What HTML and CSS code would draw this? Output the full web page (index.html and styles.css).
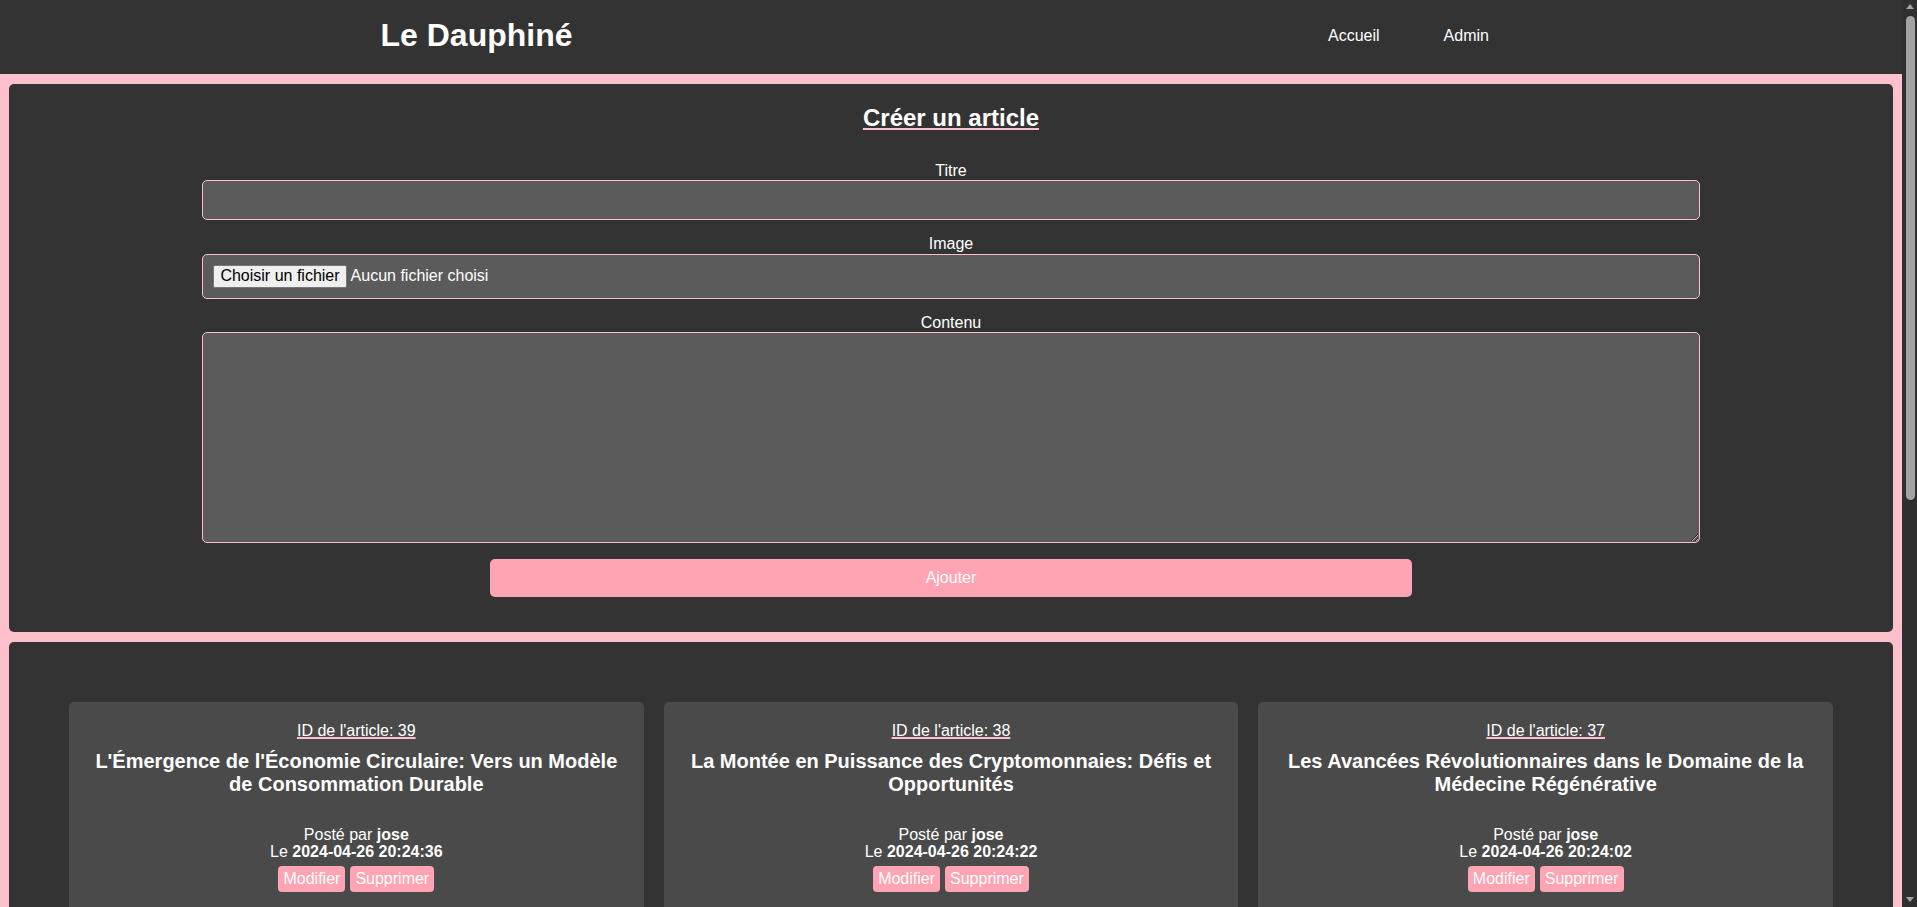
FILE: index.html
```html
<!DOCTYPE html>
<html lang="fr">
<head>
<meta charset="utf-8">
<title>Le Dauphiné</title>
<link rel="stylesheet" href="styles.css">
</head>
<body>
<header class="site-header">
  <div class="brand-col"><h1 class="brand">Le Dauphiné</h1></div>
  <nav class="nav-col">
    <a class="nav-link" href="#">Accueil</a>
    <a class="nav-link" href="#">Admin</a>
  </nav>
</header>
<main class="page">
  <section class="panel create-panel">
    <h2 class="panel-title">Créer un article</h2>
    <form class="create-form">
      <label class="field-label" for="titre">Titre</label>
      <input class="field" id="titre" type="text">
      <label class="field-label" for="image">Image</label>
      <div class="field file-field">
        <label class="file-btn" for="image">Choisir un fichier</label>
        <span class="file-name">Aucun fichier choisi</span>
        <input class="file-hidden" id="image" type="file">
      </div>
      <label class="field-label" for="contenu">Contenu</label>
      <textarea class="field area" id="contenu"></textarea>
      <button class="submit-btn" type="button">Ajouter</button>
    </form>
  </section>
  <section class="panel list-panel">
    <div class="article-grid">
      <article class="article-card">
        <p class="article-id"><a href="#">ID de l'article: 39</a></p>
        <h3 class="article-title">L'Émergence de l'Économie Circulaire: Vers un Modèle de Consommation Durable</h3>
        <p class="article-meta">Posté par <b>jose</b><br>Le <b>2024-04-26 20:24:36</b></p>
        <div class="article-actions"><button class="small-btn" type="button">Modifier</button><button class="small-btn" type="button">Supprimer</button></div>
      </article>
      <article class="article-card">
        <p class="article-id"><a href="#">ID de l'article: 38</a></p>
        <h3 class="article-title">La Montée en Puissance des Cryptomonnaies: Défis et Opportunités</h3>
        <p class="article-meta">Posté par <b>jose</b><br>Le <b>2024-04-26 20:24:22</b></p>
        <div class="article-actions"><button class="small-btn" type="button">Modifier</button><button class="small-btn" type="button">Supprimer</button></div>
      </article>
      <article class="article-card">
        <p class="article-id"><a href="#">ID de l'article: 37</a></p>
        <h3 class="article-title">Les Avancées Révolutionnaires dans le Domaine de la Médecine Régénérative</h3>
        <p class="article-meta">Posté par <b>jose</b><br>Le <b>2024-04-26 20:24:02</b></p>
        <div class="article-actions"><button class="small-btn" type="button">Modifier</button><button class="small-btn" type="button">Supprimer</button></div>
      </article>
    </div>
  </section>
</main>
<div class="fake-scrollbar" aria-hidden="true">
  <span class="sb-arrow sb-up"></span>
  <span class="sb-thumb"></span>
  <span class="sb-fill"></span>
  <span class="sb-arrow sb-down"></span>
</div>
</body>
</html>
```

FILE: styles.css
```css
* { font-family: "Liberation Sans", Arial, sans-serif; }

body {
  margin: 0;
  padding-right: 15px;
  background: #ffc0cb;
  color: #ffffff;
  font-size: 16px;
}

.site-header {
  display: grid;
  grid-template-columns: 1fr 1fr;
  align-items: center;
  background: #333333;
  padding: 17px 0 20px;
}

.brand-col {
  display: flex;
  justify-content: center;
  padding-left: 2px;
}

.brand {
  margin: 0;
  font-size: 32px;
  font-weight: bold;
  line-height: 37px;
}

.nav-col {
  display: flex;
  justify-content: center;
  gap: 64px;
  padding-right: 36px;
}

.nav-link {
  color: #ffffff;
  text-decoration: none;
  font-size: 16px;
}

.page {
  display: flex;
  flex-direction: column;
  gap: 10px;
  padding: 10px 9px;
}

.panel {
  background: #333333;
  border-radius: 5px;
}

.create-panel {
  padding: 20px;
}

.panel-title {
  margin: 0 0 20px;
  text-align: center;
  font-size: 24px;
  line-height: 27.6px;
  text-decoration: underline;
  text-decoration-color: #ffc0cb;
}

.create-form {
  display: flex;
  flex-direction: column;
  align-items: center;
}

.field-label {
  margin-top: 10px;
  line-height: 18.4px;
}

.field {
  box-sizing: content-box;
  width: 80%;
  padding: 10px;
  margin: 0 0 5px;
  border: 1px solid #ffc0cb;
  border-radius: 5px;
  background: #5b5b5b;
  color: #ffffff;
  font-size: 16px;
  line-height: 18.4px;
  height: 18.4px;
  outline: none;
}

.file-field {
  display: flex;
  align-items: center;
  height: 23px;
}

.file-btn {
  background: #efefef;
  color: #000000;
  border: 1px solid #767676;
  border-radius: 2px;
  padding: 1px 6px;
  line-height: 18.6px;
  margin-right: 4px;
}

.file-name {
  color: #ffffff;
}

.file-hidden {
  display: none;
}

.area {
  height: 189px;
  resize: vertical;
}

.submit-btn {
  width: 50%;
  margin: 11px 0 15px;
  padding: 10px;
  border: none;
  border-radius: 5px;
  background: #ffa4b2;
  color: #ffffff;
  font-size: 16px;
  line-height: 18px;
}

.list-panel {
  padding: 60px;
  min-height: 868px;
}

.article-grid {
  display: grid;
  grid-template-columns: repeat(3, 1fr);
  gap: 20px;
}

.article-card {
  background: #4a4a4a;
  border-radius: 5px;
  padding: 20px;
  text-align: center;
}

.article-id {
  margin: 0;
  line-height: 18.4px;
}

.article-id a {
  color: #ffffff;
  text-decoration: underline;
  text-decoration-color: #ffc0cb;
  text-decoration-thickness: 2px;
}

.article-title {
  margin: 9px 0 30px;
  font-size: 20px;
  line-height: 23px;
}

.article-meta {
  margin: 0;
  line-height: 17.5px;
}

.article-actions {
  display: flex;
  justify-content: center;
  gap: 5px;
  margin-top: 5px;
}

.small-btn {
  padding: 4px 5px;
  border: none;
  border-radius: 4px;
  background: #ffa4b2;
  color: #ffffff;
  font-size: 16px;
  line-height: 18.4px;
}

/* imitation of the browser's vertical scrollbar */
.fake-scrollbar {
  position: fixed;
  top: 0;
  right: 0;
  width: 15px;
  height: 100vh;
  background: #2f2f2f;
  display: flex;
  flex-direction: column;
  align-items: center;
}

.sb-arrow {
  width: 0;
  height: 0;
  border-left: 4px solid transparent;
  border-right: 4px solid transparent;
  margin: 4px 0 5px;
  flex: none;
}

.sb-up {
  border-bottom: 5px solid #a3a3a3;
}

.sb-down {
  border-top: 5px solid #a3a3a3;
}

.sb-thumb {
  width: 9px;
  height: 484px;
  margin: 2px 0 0 2px;
  background: #a3a3a3;
  border-radius: 5px;
  flex: none;
}

.sb-fill {
  flex: 1;
}
```
